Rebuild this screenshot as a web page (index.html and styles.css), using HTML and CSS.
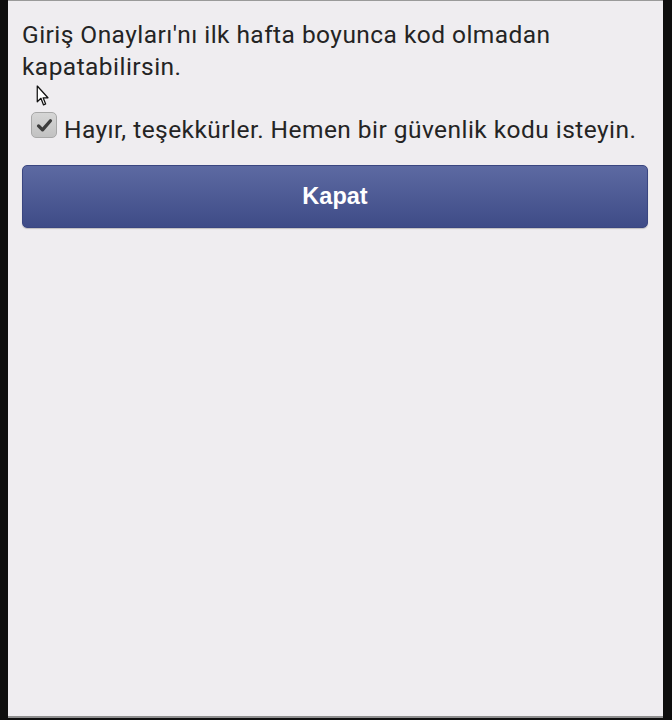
FILE: index.html
```html
<!DOCTYPE html>
<html lang="tr">
<head>
<meta charset="utf-8">
<link rel="stylesheet" href="styles.css">
</head>
<body>
<div class="frame">
  <div class="panel">
    <p class="intro">Giriş Onayları'nı ilk hafta boyunca kod olmadan kapatabilirsin.</p>
    <label class="opt">
      <span class="box">
        <svg viewBox="0 0 24 24" width="19" height="19"><path d="M4.5 12.5 L9.5 17.5 L19.5 6" fill="none" stroke="#3c3c3c" stroke-width="4.2" stroke-linecap="round" stroke-linejoin="round"/></svg>
      </span>
      <span class="opt-text">Hayır, teşekkürler. Hemen bir güvenlik kodu isteyin.</span>
    </label>
    <button class="btn">Kapat</button>
    <svg class="cursor" viewBox="0 0 12 21" width="13" height="22"><path d="M1 1 L1 16 L4.5 12.7 L7 19 L9 18.1 L6.6 12.2 L11.2 12.2 Z" fill="#fff" stroke="#111" stroke-width="1.2" stroke-linejoin="round"/></svg>
  </div>
</div>
</body>
</html>
```

FILE: styles.css
```css
html, body {
  margin: 0;
  padding: 0;
  background: #0e0e0e;
}
.frame {
  width: 672px;
  height: 720px;
  padding: 0 9px 0 8px;
  box-sizing: border-box;
}
.panel {
  position: relative;
  height: 718px;
  background: #efedf0;
  border-top: 1px solid #9a9a9a;
  border-bottom: 2px solid #8e8e8e;
  box-sizing: border-box;
  padding: 18px 15px 0 14px;
  font-family: Roboto, "Liberation Sans", sans-serif;
  color: #242424;
}
.intro {
  margin: 0;
  font-size: 24.5px;
  letter-spacing: 0.45px;
  line-height: 32px;
}
.opt {
  display: flex;
  align-items: flex-start;
  gap: 7px;
  margin: 29px 0 0 9px;
}
.box {
  flex: none;
  width: 26px;
  height: 26px;
  border-radius: 5px;
  background: linear-gradient(#d6d6d6, #c2c2c2);
  border: 1px solid #a8a8a8;
  display: flex;
  align-items: center;
  justify-content: center;
  box-sizing: border-box;
}
.opt-text {
  font-size: 24.5px;
  letter-spacing: 0.45px;
  line-height: 30px;
  padding-top: 3px;
}
.btn {
  display: block;
  width: 100%;
  height: 63px;
  margin-top: 20px;
  border: 1px solid #3a4680;
  border-radius: 5px;
  background: linear-gradient(#5d6aa2, #3e4b87);
  color: #fff;
  font-family: "Liberation Sans", Arial, sans-serif;
  font-weight: bold;
  font-size: 23.5px;
  box-shadow: 0 1px 1px rgba(0,0,0,0.2);
}
.cursor {
  position: absolute;
  left: 28px;
  top: 84px;
}
```
